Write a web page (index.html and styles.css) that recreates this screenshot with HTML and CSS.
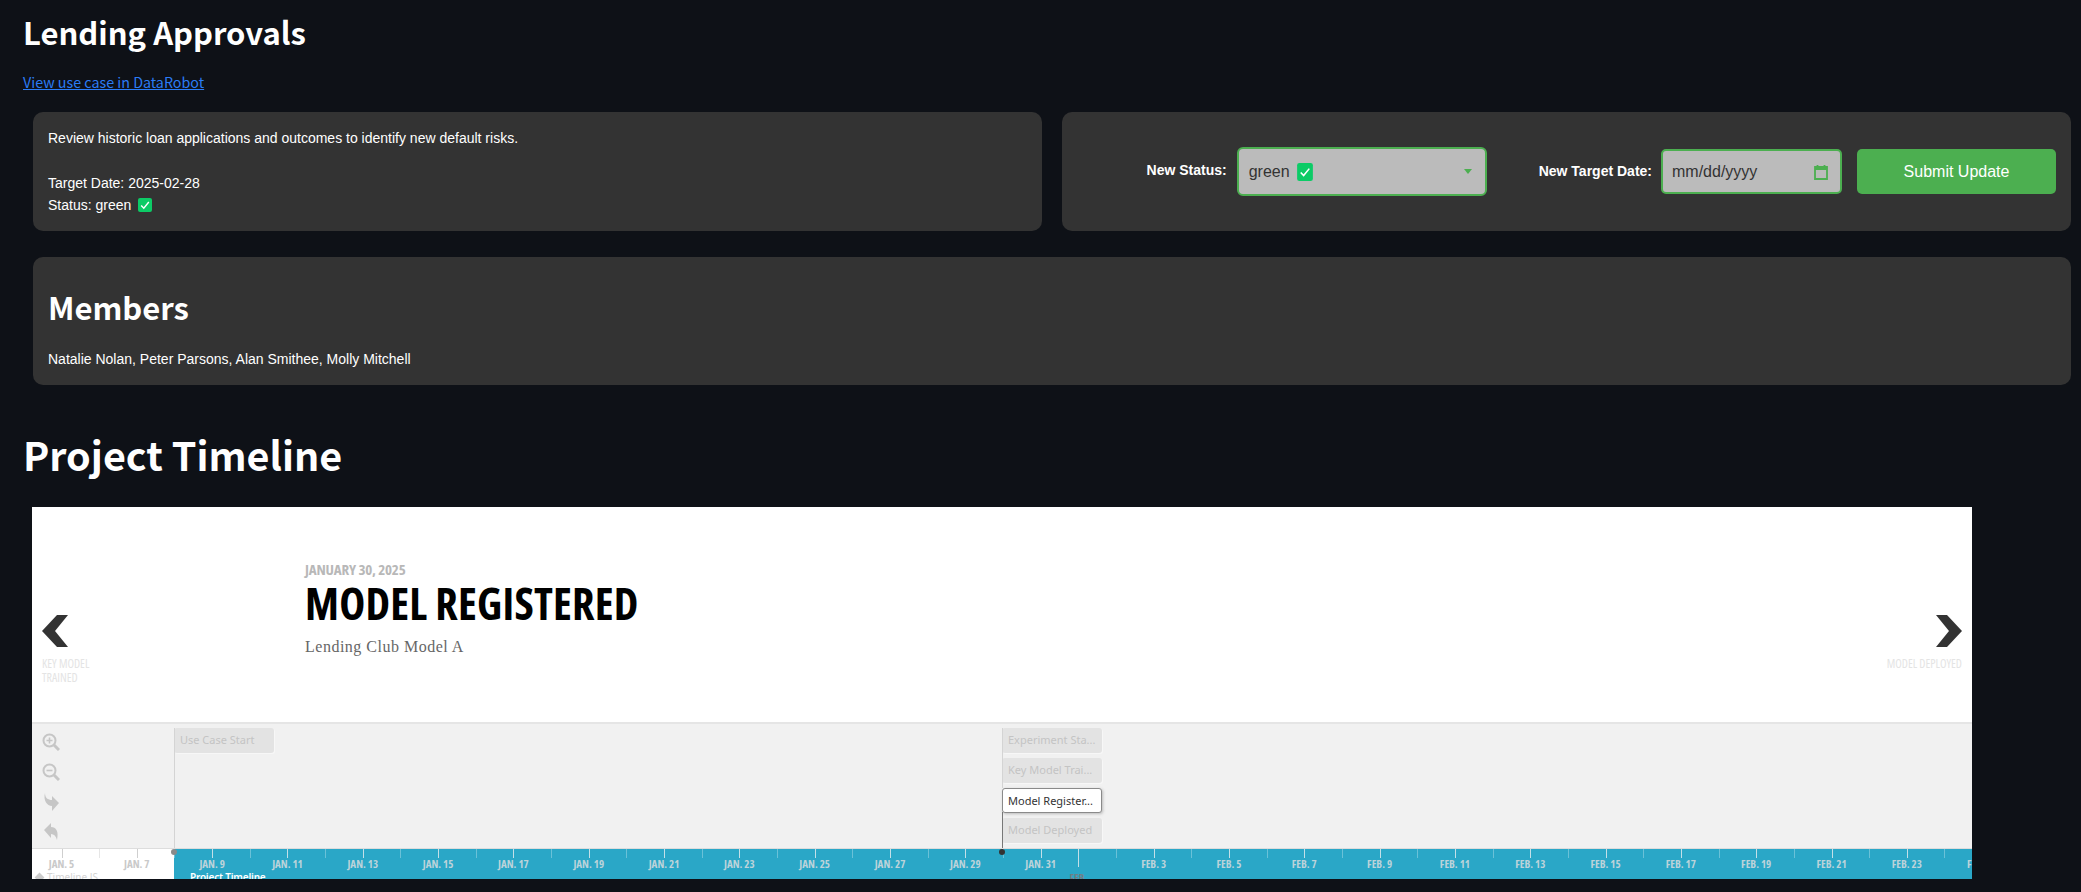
FILE: index.html
```html
<!DOCTYPE html>
<html lang="en">
<head>
    <meta charset="UTF-8">
    <meta name="viewport" content="width=device-width, initial-scale=1.0">
    <title>Lending Approvals</title>
    <link rel="stylesheet" href="styles.css">
</head>
<body>
    <h1 class="page-title">Lending Approvals</h1>
    <a class="use-case-link" href="#">View use case in DataRobot</a>

    <div class="card-row">
        <div class="card info-card">
            <p>Review historic loan applications and outcomes to identify new default risks.</p>
            <p class="info-gap">Target Date: 2025-02-28</p>
            <p class="status-line">Status: green
                <svg class="check-icon" viewBox="0 0 14 14"><rect width="14" height="14" rx="2" fill="#0ccb66"/><path d="M3.2 7.4l2.6 2.8 5-6.2" fill="none" stroke="#fff" stroke-width="1.4"/></svg>
            </p>
        </div>
        <form class="card update-card">
            <label class="field-label">New Status:</label>
            <div class="status-select">
                <span>green</span>
                <svg class="check-icon select-check" viewBox="0 0 14 16"><rect width="14" height="16" rx="2" fill="#0ccb66"/><path d="M3.2 8.4l2.6 2.8 5-6.2" fill="none" stroke="#fff" stroke-width="1.4"/></svg>
                <span class="select-arrow"></span>
            </div>
            <label class="field-label date-label">New Target Date:</label>
            <div class="date-input">
                <span>mm/dd/yyyy</span>
                <svg class="calendar-icon" viewBox="0 0 14 16"><path d="M1 3h12v12H1zM3.5 1v3M10.5 1v3" fill="none" stroke="#4caf50" stroke-width="1.8"/><path d="M1 2.5h12v3.5H1z" fill="#4caf50"/></svg>
            </div>
            <button type="button" class="submit-btn">Submit Update</button>
        </form>
    </div>

    <div class="card members-card">
        <h2>Members</h2>
        <p>Natalie Nolan, Peter Parsons, Alan Smithee, Molly Mitchell</p>
    </div>

    <h1 class="section-title">Project Timeline</h1>

    <div class="timeline">
        <div class="slide">
            <div class="slide-nav nav-prev">
                <svg class="chevron" viewBox="0 0 26 32"><path d="M15 0h11L13 16l13 16H15L0 16z" fill="#333"/></svg>
                <span>KEY MODEL<br>TRAINED</span>
            </div>
            <div class="slide-text">
                <div class="slide-date">JANUARY 30, 2025</div>
                <div class="slide-title">MODEL REGISTERED</div>
                <div class="slide-body">Lending Club Model A</div>
            </div>
            <div class="slide-nav nav-next">
                <svg class="chevron" viewBox="0 0 26 32"><path d="M11 0H0l13 16L0 32h11l15-16z" fill="#333"/></svg>
                <span>MODEL DEPLOYED</span>
            </div>
        </div>
        <div class="track">
            <div class="zoom-tools">
                <svg viewBox="0 0 18 18"><circle cx="7.5" cy="7.5" r="6" fill="none" stroke="#c6c6c6" stroke-width="2"/><path d="M12 12l5 5" stroke="#c6c6c6" stroke-width="3"/><path d="M4.5 7.5h6M7.5 4.5v6" stroke="#c6c6c6" stroke-width="1.6"/></svg>
                <svg viewBox="0 0 18 18"><circle cx="7.5" cy="7.5" r="6" fill="none" stroke="#c6c6c6" stroke-width="2"/><path d="M12 12l5 5" stroke="#c6c6c6" stroke-width="3"/><path d="M4.5 7.5h6" stroke="#c6c6c6" stroke-width="1.6"/></svg>
                <svg viewBox="0 0 18 18"><path d="M3 0C3 5 6 7 10 7V3l7 7-7 8v-5C5 13 1 7 3 0z" fill="#c6c6c6"/></svg>
                <svg viewBox="0 0 18 18"><path d="M9 0v4c5 0 8 4 6 13-1-4-3-6-6-6v4L2 7z" fill="#c6c6c6"/></svg>
            </div>
            <div class="marker marker-start">Use Case Start</div>
            <div class="marker marker-a">Experiment Sta...</div>
            <div class="marker marker-b">Key Model Trai...</div>
            <div class="marker marker-c active">Model Register...</div>
            <div class="marker marker-d">Model Deployed</div>
            <div class="marker-line line-start"></div>
            <div class="marker-line line-mid"></div>
            <div class="marker-line line-active"></div>
        </div>
        <div class="axis" id="axis">
            <div class="axis-era"></div>
            <div class="era-name">Project Timeline</div>
            <div class="credit"><span class="credit-mark"></span>Timeline JS</div>
            <span class="axis-dot dot-start"></span>
            <span class="axis-dot dot-active"></span>
        </div>
    </div>

    <script src="timeline.js"></script>
</body>
</html>
```

FILE: styles.css
```css
* {
    margin: 0;
    padding: 0;
    box-sizing: border-box;
}

body {
    background-color: #0e1117;
    color: #ffffff;
    font-family: "Liberation Sans", Arial, sans-serif;
    height: 892px;
    overflow: hidden;
    padding: 12px 0 0 23px;
}

.page-title {
    font-family: "Noto Sans CJK SC", "Noto Sans", sans-serif;
    font-size: 31px;
    font-weight: 700;
    line-height: 40px;
}

.use-case-link {
    display: block;
    margin-top: 20px;
    width: max-content;
    color: #2b7cf5;
    font-family: "Noto Sans CJK SC", "Noto Sans", sans-serif;
    font-size: 14.3px;
    line-height: 20px;
}

.card-row {
    display: grid;
    grid-template-columns: 1fr 1fr;
    gap: 20px;
    margin: 20px 10px 0 10px;
}

.card {
    background-color: #333333;
    border-radius: 10px;
}

.info-card {
    height: 119px;
    padding: 15px 15px;
    font-size: 14px;
    line-height: 22px;
}

.info-gap {
    margin-top: 23px;
}

.check-icon {
    display: inline-block;
    width: 14px;
    height: 14px;
    vertical-align: -2px;
    margin-left: 3px;
}

.select-check {
    width: 16px;
    height: 18px;
    margin-left: 2px;
}

.update-card {
    height: 119px;
    display: flex;
    align-items: center;
    justify-content: flex-end;
    padding-right: 15px;
}

.field-label {
    font-size: 14px;
    font-weight: 700;
    margin: -4px 10px 0 0;
}

.status-select {
    display: flex;
    align-items: center;
    gap: 5px;
    width: 250px;
    height: 49px;
    padding: 0 10px;
    background-color: #bbbbbb;
    border: 2px solid #4caf50;
    border-radius: 6px;
    color: #333333;
    font-size: 16px;
}

.select-arrow {
    margin-left: auto;
    margin-right: 3px;
    border-left: 4px solid transparent;
    border-right: 4px solid transparent;
    border-top: 5px solid #4caf50;
}

.date-label {
    margin-left: 52px;
    margin-right: 9px;
    margin-top: -2px;
}

.date-input {
    display: flex;
    align-items: center;
    justify-content: space-between;
    width: 181px;
    height: 45px;
    padding: 0 12px 0 9px;
    background-color: #bbbbbb;
    border: 2px solid #4caf50;
    border-radius: 5px;
    color: #333333;
    font-size: 16px;
}

.calendar-icon {
    width: 14px;
    height: 16px;
}

.submit-btn {
    width: 199px;
    height: 45px;
    margin-left: 15px;
    background-color: #4caf50;
    color: #ffffff;
    border: none;
    border-radius: 5px;
    font-family: "Liberation Sans", Arial, sans-serif;
    font-size: 16px;
}

.members-card {
    height: 128px;
    margin: 26px 10px 0 10px;
    padding: 27px 15px 0 15px;
}

.members-card h2 {
    font-family: "Noto Sans CJK SC", "Noto Sans", sans-serif;
    font-size: 31px;
    font-weight: 700;
    line-height: 46px;
}

.members-card p {
    margin-top: 19px;
    font-size: 14px;
    line-height: 20px;
}

.section-title {
    margin-top: 39px;
    font-family: "Noto Sans CJK SC", "Noto Sans", sans-serif;
    font-size: 39.5px;
    font-weight: 700;
    line-height: 60px;
}

/* timeline */
.timeline {
    display: flex;
    flex-direction: column;
    width: 1940px;
    height: 372px;
    margin: 23px 0 0 9px;
    background-color: #ffffff;
    overflow: hidden;
}

.slide {
    position: relative;
    height: 217px;
    flex-shrink: 0;
    border-bottom: 2px solid #e5e5e5;
}

.slide-nav {
    position: absolute;
    top: 108px;
    color: #e4e4e4;
    font-family: "Open Sans", sans-serif;
    font-stretch: 75%;
    font-size: 12px;
    line-height: 14px;
}

.nav-prev {
    left: 10px;
}

.nav-next {
    right: 10px;
    text-align: right;
}

.chevron {
    display: block;
    width: 26px;
    height: 32px;
    margin-bottom: 10px;
}

.nav-next .chevron {
    margin-left: auto;
}

.slide-text {
    position: absolute;
    left: 273px;
    top: 52px;
}

.slide-date {
    color: #b8b8b8;
    font-family: "Open Sans", sans-serif;
    font-stretch: 75%;
    font-size: 15px;
    font-weight: 700;
    line-height: 20px;
    letter-spacing: -0.2px;
}

.slide-title {
    color: #000000;
    font-family: "Open Sans", sans-serif;
    font-stretch: 75%;
    font-size: 44px;
    font-weight: 700;
    line-height: 48px;
    letter-spacing: 0.2px;
}

.slide-body {
    margin-top: 9px;
    color: #666666;
    font-family: "Liberation Serif", serif;
    font-size: 16px;
    line-height: 22px;
    letter-spacing: 0.5px;
}

.track {
    position: relative;
    height: 124px;
    flex-shrink: 0;
    background-color: #f1f1f1;
}

.zoom-tools {
    display: flex;
    flex-direction: column;
    gap: 12px;
    padding: 9px 0 0 10px;
}

.zoom-tools svg {
    display: block;
    width: 18px;
    height: 18px;
}

.marker {
    position: absolute;
    width: 100px;
    height: 25px;
    padding: 0 6px;
    background-color: #e3e3e3;
    border-radius: 3px;
    box-shadow: 1px 1px 0 #f7f7f7;
    color: #c4c4c4;
    font-family: "Noto Sans", sans-serif;
    font-size: 11px;
    line-height: 24px;
    white-space: nowrap;
}

.marker.active {
    background-color: #ffffff;
    border: 1px solid #8a8a8a;
    padding: 0 5px;
    box-shadow: 1px 1px 3px #bbbbbb;
    color: #333333;
    line-height: 23px;
}

.marker-start { left: 142px; top: 4px; }
.marker-a { left: 970px; top: 4px; }
.marker-b { left: 970px; top: 34px; }
.marker-c { left: 970px; top: 64px; }
.marker-d { left: 970px; top: 94px; }

.marker-line {
    position: absolute;
    width: 1px;
    background-color: #d4d4d4;
}

.line-start { left: 142px; top: 4px; height: 120px; }
.line-mid { left: 970px; top: 4px; height: 60px; }
.line-active { left: 970px; top: 88px; height: 36px; background-color: #777777; }

.axis {
    position: relative;
    flex: 1;
    border-top: 1px solid #dddddd;
    background-color: #ffffff;
}

.axis-era {
    position: absolute;
    left: 142px;
    right: 0;
    top: 0;
    bottom: 0;
    background-color: #2aa7c7;
}

.era-name {
    position: absolute;
    left: 158px;
    top: 21px;
    color: #ffffff;
    font-family: "Noto Sans", sans-serif;
    font-size: 10px;
    font-weight: 600;
    line-height: 14px;
    letter-spacing: -0.2px;
}

.credit {
    position: absolute;
    left: 2px;
    top: 21px;
    color: #d4d4d4;
    font-family: "Noto Sans", sans-serif;
    font-size: 10px;
    line-height: 14px;
}

.credit-mark {
    display: inline-block;
    width: 7px;
    height: 7px;
    margin: 0 4px 0 2px;
    background-color: #cccccc;
    transform: rotate(45deg);
}

.tick {
    position: absolute;
    top: 0;
    width: 1px;
    height: 9px;
    background-color: #c4dfe8;
}

.tick-minor {
    background-color: rgba(255, 255, 255, 0.3);
}

.tick-month {
    height: 18px;
}

.tick-pre {
    background-color: #cfcfcf;
}

.tick-pre.tick-minor {
    background-color: #e6e6e6;
}

.tick-label {
    position: absolute;
    top: 9px;
    width: 60px;
    margin-left: -30px;
    text-align: center;
    color: #bcd3da;
    font-family: "Open Sans", sans-serif;
    font-stretch: 75%;
    font-size: 11px;
    font-weight: 700;
    line-height: 12px;
}

.label-pre {
    color: #c9c9c9;
}

.label-month {
    top: 23px;
    color: #6f7f85;
}

.axis-dot {
    position: absolute;
    top: 0;
    width: 6px;
    height: 6px;
    border-radius: 50%;
}

.dot-start { left: 139px; background-color: #8a8a8a; }
.dot-active { left: 967px; background-color: #333333; }
```

FILE: timeline.js
```js
// Build the date axis: one tick per day, a label every second day
const axis = document.getElementById('axis');
const dayWidth = 37.66;
const firstTick = 29.5;
const months = ['JAN.', 'FEB.'];

for (let i = 0; i < 52; i++) {
    const date = new Date(2025, 0, 5 + i);
    const day = date.getDate();
    const left = firstTick + dayWidth * i;
    const isMonth = day === 1;
    const isMajor = day % 2 === 1;
    const isPre = i < 3;

    const tick = document.createElement('span');
    tick.className = 'tick';
    if (!isMajor) tick.classList.add('tick-minor');
    if (isMonth) tick.classList.add('tick-month');
    if (isPre) tick.classList.add('tick-pre');
    tick.style.left = Math.round(left) + 'px';
    axis.appendChild(tick);

    if (isMajor) {
        const label = document.createElement('span');
        label.className = 'tick-label';
        if (isPre) label.classList.add('label-pre');
        if (isMonth) label.classList.add('label-month');
        label.textContent = months[date.getMonth()] + (isMonth ? '' : ' ' + day);
        label.style.left = left + 'px';
        axis.appendChild(label);
    }
}

// keep the dots above the ticks
axis.querySelectorAll('.axis-dot').forEach(function (dot) {
    axis.appendChild(dot);
});
```
